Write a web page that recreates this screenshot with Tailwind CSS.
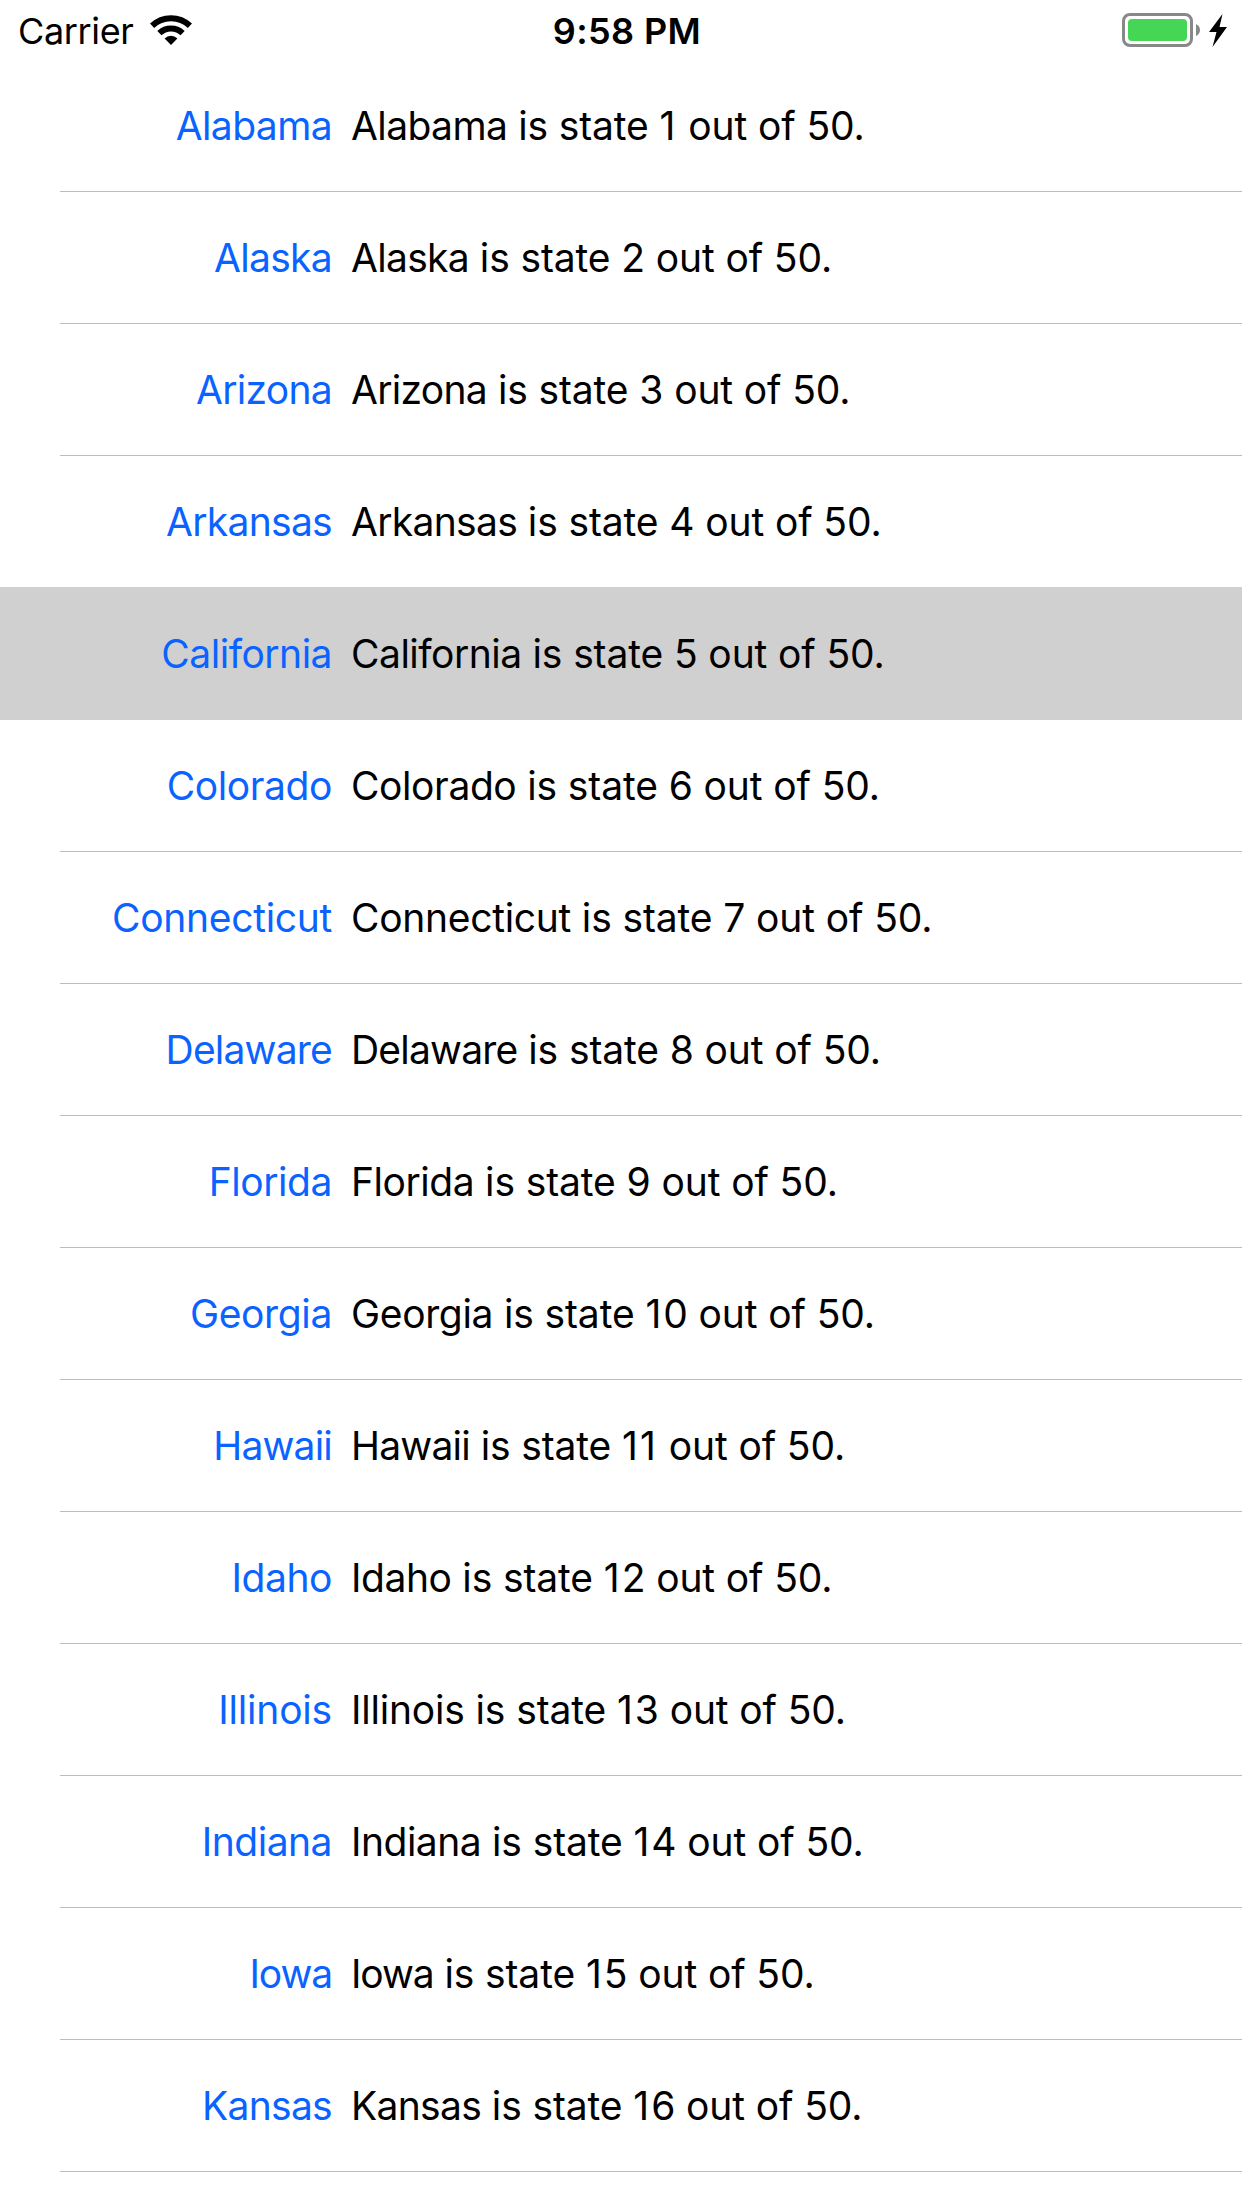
<!DOCTYPE html>
<html lang="en">
<head>
  <meta charset="UTF-8">
  <meta name="viewport" content="width=device-width, initial-scale=1.0">
  <title>States</title>
  <script src="https://cdn.jsdelivr.net/npm/@tailwindcss/browser@4"></script>
</head>
<body class="bg-white text-black font-['Inter','Liberation_Sans',sans-serif] overflow-hidden">
  <header class="h-[60px] grid grid-cols-3 pl-[18px] pr-[14px] leading-[62px] text-[36px] whitespace-nowrap">
    <div class="flex">
      <span class="w-[132px] tracking-[-0.35px]">Carrier</span>
      <svg class="w-[42px] h-[60px]" viewBox="0 0 42 60">
        <g fill="none" stroke="#000" stroke-width="6">
          <path d="M2.1 25.8A27.5 27.5 0 0 1 39.9 25.8"/>
          <path d="M9.4 33.1A16.8 16.8 0 0 1 32.6 33.1"/>
        </g>
        <path d="M14.6 38.4A9.1 9.1 0 0 1 27.4 38.4L21 45Z"/>
      </svg>
    </div>
    <div class="text-center font-semibold tracking-[0.4px] pl-[8px]">9:58 PM</div>
    <div class="flex justify-end">
      <svg class="w-[106px] h-[60px]" viewBox="0 0 106 60">
        <rect x="1.5" y="14.5" width="68" height="31" rx="6.5" fill="none" stroke="#888" stroke-width="3"/>
        <rect x="6" y="19" width="59" height="22" rx="4" fill="#44d654"/>
        <path d="M74 24Q78 26 78 30Q78 34 74 36Z" fill="#888"/>
        <path d="M100.5 14L87 32H94.5L90.5 47L105 27H97.5Z"/>
      </svg>
    </div>
  </header>

  <ul id="states" class="text-[39px]"></ul>

  <script>
    // name, letter spacing in px
    const states = [
      ['Alabama', -0.6], ['Alaska', -0.7], ['Arizona', -0.7], ['Arkansas', -0.7],
      ['California', -0.5], ['Colorado', -0.4], ['Connecticut', -0.3], ['Delaware', -0.8],
      ['Florida', -0.45], ['Georgia', -0.35], ['Hawaii', -0.8], ['Idaho', -0.45],
      ['Illinois', -0.2], ['Indiana', -0.5], ['Iowa', -1.1], ['Kansas', -0.7],
    ];
    const selected = 'California';

    document.getElementById('states').innerHTML = states.map(([name, spacing], i) => {
      const row = name === selected
        ? 'h-[133px] -mt-px pt-px relative bg-[#d0d0d0]'
        : 'h-[132px]';
      const line = name === selected ? 'border-transparent' : 'border-[#bcbcbe]';
      // the digit 1 is narrow, give it some room
      const number = String(i + 1).replace(/1/g, '<span class="tracking-[2px]">1</span>');
      return `
        <li class="${row} pl-[60px]">
          <div class="h-[132px] pt-[2px] border-b ${line} flex items-center whitespace-nowrap">
            <a class="w-[272px] text-right text-[#0a62ff]" style="letter-spacing: ${spacing}px">${name}</a>
            <span class="pl-[19px] tracking-[-0.12px]"><span style="letter-spacing: ${spacing}px">${name}</span> is state ${number} out of 50.</span>
          </div>
        </li>`;
    }).join('');
  </script>
</body>
</html>
